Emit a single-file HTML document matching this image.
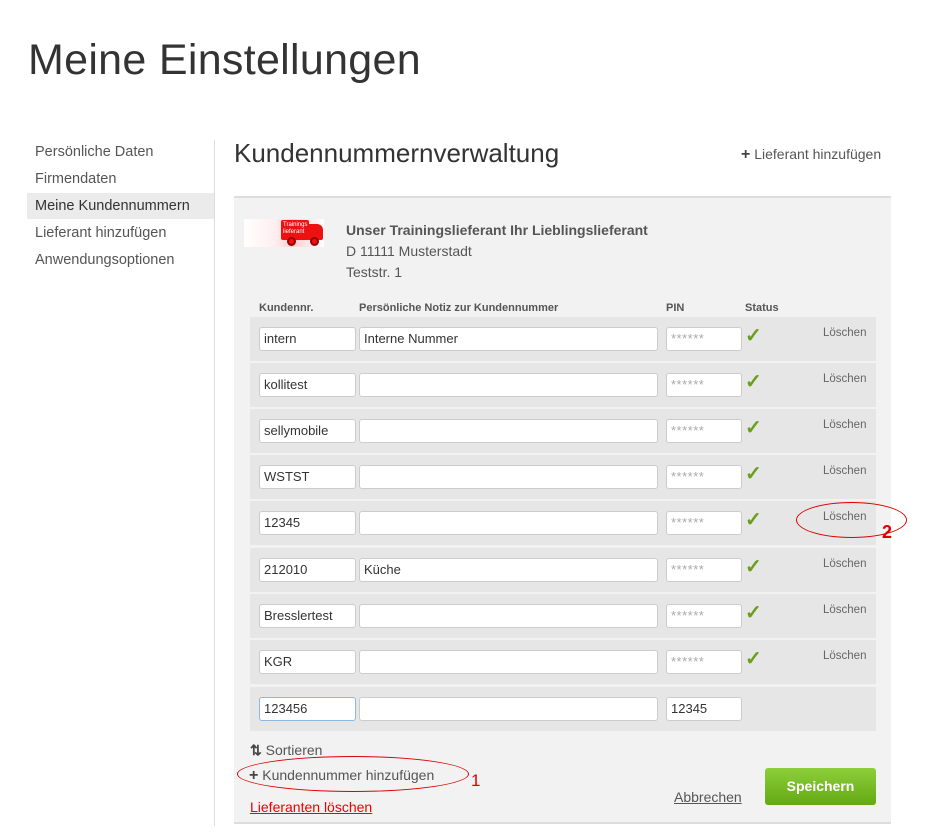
<!DOCTYPE html>
<html><head><meta charset="utf-8"><style>
*{box-sizing:border-box;margin:0;padding:0}
body{width:936px;height:834px;background:#fff;font-family:"Liberation Sans",sans-serif;color:#444;position:relative;overflow:hidden}
.a{position:absolute;white-space:nowrap}
h1{position:absolute;left:28px;top:36px;font-weight:normal;font-size:43px;color:#333;letter-spacing:0.3px}
.nav{font-size:14.5px;color:#555}
.row{position:absolute;left:250px;width:626px;height:44px;background:#e6e6e6}
.in{position:absolute;top:10px;height:24px;background:#fff;border:1px solid #ccc;border-radius:3px;font-size:13px;color:#333;padding:3px 4px;line-height:16px}
.pin{color:#aaa;letter-spacing:0.5px}
.del{position:absolute;left:573px;top:10px;font-size:11.5px;color:#666}
.hd{font-size:11px;font-weight:bold;color:#555;top:302px}
</style></head><body>
<h1>Meine Einstellungen</h1>
<div class="a" style="left:27px;top:193px;width:187px;height:26px;background:#ebebeb"></div>
<div class="a nav" style="left:35px;top:144px">Persönliche Daten</div>
<div class="a nav" style="left:35px;top:171px">Firmendaten</div>
<div class="a nav" style="left:35px;top:198px;color:#333">Meine Kundennummern</div>
<div class="a nav" style="left:35px;top:225px">Lieferant hinzufügen</div>
<div class="a nav" style="left:35px;top:252px">Anwendungsoptionen</div>
<div class="a" style="left:214px;top:140px;width:1px;height:686px;background:#ddd"></div>
<div class="a" style="left:234px;top:138px;font-size:26px;color:#333">Kundennummernverwaltung</div>
<div class="a" style="left:741px;top:146px;font-size:14px;color:#555"><b style="font-size:16px;color:#444">+</b> Lieferant hinzufügen</div>
<div class="a" style="left:234px;top:196px;width:657px;height:628px;background:#f2f2f2;border-top:2px solid #ddd;border-bottom:2px solid #ddd"></div>
<div class="a" style="left:244px;top:219px;width:80px;height:28px;background:linear-gradient(90deg,#fff,#fee 40%,#fcc 60%,#fff)"></div>
<div class="a" style="left:281px;top:220px;width:28px;height:20px;background:#e11;border-radius:2px;font-size:6px;color:#fff;padding:2px;line-height:7px">Trainings<br>lieferant</div>
<div class="a" style="left:308px;top:224px;width:15px;height:16px;background:#e11;border-radius:0 6px 2px 0"></div>
<div class="a" style="left:287px;top:237px;width:9px;height:9px;background:#e11;border:2px solid #900;border-radius:50%"></div>
<div class="a" style="left:310px;top:237px;width:9px;height:9px;background:#e11;border:2px solid #900;border-radius:50%"></div>
<div class="a" style="left:346px;top:222px;font-size:14px;font-weight:bold;color:#555">Unser Trainingslieferant Ihr Lieblingslieferant</div>
<div class="a" style="left:346px;top:243px;font-size:14px;color:#555">D 11111 Musterstadt</div>
<div class="a" style="left:346px;top:264px;font-size:14px;color:#555">Teststr. 1</div>
<div class="a hd" style="left:259px">Kundennr.</div>
<div class="a hd" style="left:359px">Persönliche Notiz zur Kundennummer</div>
<div class="a hd" style="left:666px">PIN</div>
<div class="a hd" style="left:745px">Status</div>

<div class="row" style="top:317px"><div class="in" style="left:9px;width:97px">intern</div><div class="in" style="left:109px;width:299px">Interne Nummer</div><div class="in pin" style="left:416px;width:76px">******</div><div class="a" style="left:495px;top:6px;color:#6a9f1c;font-size:20px;font-weight:bold">✓</div><div class="del">Löschen</div></div>
<div class="row" style="top:363px"><div class="in" style="left:9px;width:97px">kollitest</div><div class="in" style="left:109px;width:299px"></div><div class="in pin" style="left:416px;width:76px">******</div><div class="a" style="left:495px;top:6px;color:#6a9f1c;font-size:20px;font-weight:bold">✓</div><div class="del">Löschen</div></div>
<div class="row" style="top:409px"><div class="in" style="left:9px;width:97px">sellymobile</div><div class="in" style="left:109px;width:299px"></div><div class="in pin" style="left:416px;width:76px">******</div><div class="a" style="left:495px;top:6px;color:#6a9f1c;font-size:20px;font-weight:bold">✓</div><div class="del">Löschen</div></div>
<div class="row" style="top:455px"><div class="in" style="left:9px;width:97px">WSTST</div><div class="in" style="left:109px;width:299px"></div><div class="in pin" style="left:416px;width:76px">******</div><div class="a" style="left:495px;top:6px;color:#6a9f1c;font-size:20px;font-weight:bold">✓</div><div class="del">Löschen</div></div>
<div class="row" style="top:501px"><div class="in" style="left:9px;width:97px">12345</div><div class="in" style="left:109px;width:299px"></div><div class="in pin" style="left:416px;width:76px">******</div><div class="a" style="left:495px;top:6px;color:#6a9f1c;font-size:20px;font-weight:bold">✓</div><div class="del">Löschen</div></div>
<div class="row" style="top:548px"><div class="in" style="left:9px;width:97px">212010</div><div class="in" style="left:109px;width:299px">Küche</div><div class="in pin" style="left:416px;width:76px">******</div><div class="a" style="left:495px;top:6px;color:#6a9f1c;font-size:20px;font-weight:bold">✓</div><div class="del">Löschen</div></div>
<div class="row" style="top:594px"><div class="in" style="left:9px;width:97px">Bresslertest</div><div class="in" style="left:109px;width:299px"></div><div class="in pin" style="left:416px;width:76px">******</div><div class="a" style="left:495px;top:6px;color:#6a9f1c;font-size:20px;font-weight:bold">✓</div><div class="del">Löschen</div></div>
<div class="row" style="top:640px"><div class="in" style="left:9px;width:97px">KGR</div><div class="in" style="left:109px;width:299px"></div><div class="in pin" style="left:416px;width:76px">******</div><div class="a" style="left:495px;top:6px;color:#6a9f1c;font-size:20px;font-weight:bold">✓</div><div class="del">Löschen</div></div>
<div class="row" style="top:687px"><div class="in" style="left:9px;width:97px;border-color:#8ab8e0">123456</div><div class="in" style="left:109px;width:299px"></div><div class="in" style="left:416px;width:76px">12345</div></div>

<div class="a" style="left:250px;top:742px;font-size:14px;color:#555"><b style="color:#444">⇅</b> Sortieren</div>
<div class="a" style="left:249px;top:767px;font-size:14px;color:#555"><b style="font-size:16px;color:#444">+</b> Kundennummer hinzufügen</div>
<div class="a" style="left:250px;top:799px;font-size:14px;color:#e00;text-decoration:underline">Lieferanten löschen</div>
<div class="a" style="left:674px;top:789px;font-size:14px;color:#555;text-decoration:underline">Abbrechen</div>
<div class="a" style="left:765px;top:768px;width:111px;height:37px;background:linear-gradient(#8ccf3a,#64a814);border-radius:3px;color:#fff;font-weight:bold;font-size:14px;text-align:center;line-height:37px">Speichern</div>
<div class="a" style="left:237px;top:756px;width:232px;height:36px;border:1.5px solid #d00;border-radius:50%"></div>
<div class="a" style="left:471px;top:771px;color:#d00;font-size:17px">1</div>
<div class="a" style="left:796px;top:502px;width:111px;height:36px;border:1.5px solid #d00;border-radius:50%"></div>
<div class="a" style="left:882px;top:522px;color:#d00;font-size:18px;font-weight:bold">2</div>
</body></html>
